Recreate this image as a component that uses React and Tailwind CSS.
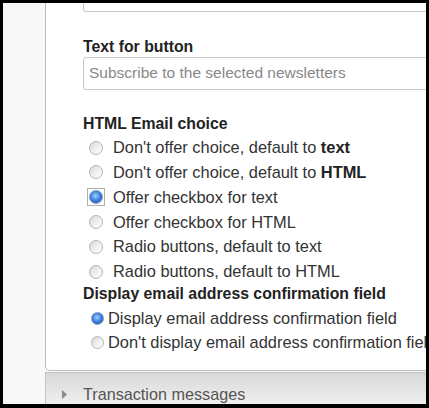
import React from "react";

const Radio = ({ checked, small }) => {
  const size = small ? "w-[13px] h-[13px]" : "w-[14px] h-[14px]";
  if (checked) {
    return (
      <span
        className={`${size} rounded-full border border-[#7d98bd] bg-[radial-gradient(circle_at_45%_40%,#a8d0f8_0%,#4a8fe4_40%,#2163c6_70%,#e2e9f3_78%,#f6f7f9_100%)] shrink-0`}
      />
    );
  }
  return (
    <span
      className={`${size} rounded-full border border-[#b4b4b4] bg-[linear-gradient(135deg,#d6d6d6_0%,#f1f1f1_55%,#ffffff_100%)] shrink-0`}
    />
  );
};

const Option = ({ children, checked, focused }) => (
  <div className="flex items-center h-[24.8px] leading-[24.8px] text-[16.4px] text-[#333] pl-[4px]">
    <span
      className={`w-[18px] h-[18px] flex items-center justify-center ${
        focused ? "border border-[#b0b0b0]" : "border border-transparent"
      }`}
    >
      <Radio checked={checked} />
    </span>
    <span className="ml-[8px] whitespace-nowrap">{children}</span>
  </div>
);

const SmallOption = ({ children, checked }) => (
  <div className="flex items-center h-[24px] leading-[24px] text-[16.4px] text-[#333] pl-[8px]">
    <Radio checked={checked} small />
    <span className="ml-[4px] whitespace-nowrap">{children}</span>
  </div>
);

export default function App() {
  return (
    <div
      className="w-[429px] h-[408px] bg-black pt-[3px] pl-[3px] pr-[3px] pb-[4px]"
      style={{ fontFamily: '"Liberation Sans", Arial, sans-serif' }}
    >
      <div className="h-full bg-[#f8f8f8] overflow-hidden pl-[42px] flex flex-col">
        {/* Open fieldset */}
        <div className="bg-white border-l border-b border-[#bdbdbd] rounded-bl-[5px] h-[368px] pl-[37px] shrink-0">
          <div className="h-[9px] w-[420px] border-x border-b border-[#c8c8c8] rounded-b-[3px]" />

          <div className="mt-[24.5px] text-[15.8px] leading-[20px] font-bold text-[#222]">
            Text for button
          </div>
          <div className="h-[33px] w-[420px] border border-[#c8c8c8] rounded-[3px] flex items-center pl-[5px] text-[15.5px] text-[#888] whitespace-nowrap">
            Subscribe to the selected newsletters
          </div>

          <div className="mt-[24.5px] text-[15.8px] leading-[20px] font-bold text-[#222]">
            HTML Email choice
          </div>
          <div className="mt-[1.3px]">
            <Option>
              Don't offer choice, default to <b className="text-[#222]">text</b>
            </Option>
            <Option>
              Don't offer choice, default to <b className="text-[#222]">HTML</b>
            </Option>
            <Option checked focused>
              Offer checkbox for text
            </Option>
            <Option>Offer checkbox for HTML</Option>
            <Option>Radio buttons, default to text</Option>
            <Option>Radio buttons, default to HTML</Option>
          </div>

          <div className="text-[15.8px] leading-[20px] font-bold text-[#222] whitespace-nowrap">
            Display email address confirmation field
          </div>
          <div className="mt-[2px]">
            <SmallOption checked>Display email address confirmation field</SmallOption>
            <SmallOption>Don't display email address confirmation field</SmallOption>
          </div>
        </div>

        {/* Collapsed fieldset */}
        <div className="mt-[1px] flex-1 border-l border-t border-[#c4c4c4] bg-[linear-gradient(to_bottom,#d8d8d8,#f0f0f0)] flex items-start pt-[11px] pl-[16px]">
          <svg width="6" height="9" viewBox="0 0 6 9" className="mt-[6px]">
            <path d="M0 0 L5 4.5 L0 9 Z" fill="#8a8a8a" />
          </svg>
          <span className="ml-[15px] text-[16.2px] leading-[20px] text-[#555] whitespace-nowrap">
            Transaction messages
          </span>
        </div>
      </div>
    </div>
  );
}
